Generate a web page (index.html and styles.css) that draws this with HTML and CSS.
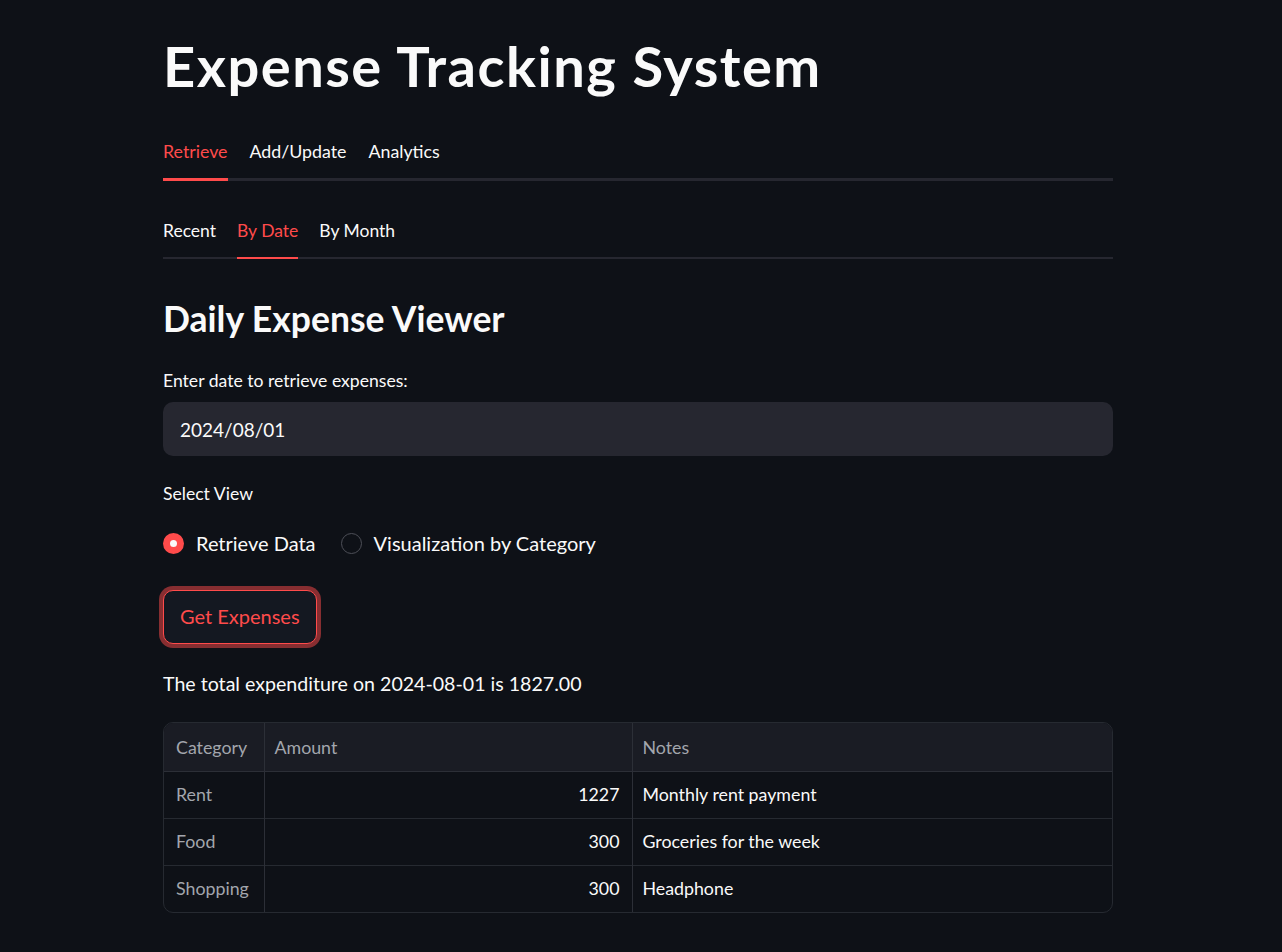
FILE: index.html
```html
<!DOCTYPE html>
<html lang="en">
<head>
<meta charset="utf-8">
<title>Expense Tracking System</title>
<link rel="stylesheet" href="styles.css">
</head>
<body>
<main class="page">
  <h1 class="title">Expense Tracking System</h1>

  <nav class="tabs tabs-main">
    <span class="tab active">Retrieve</span>
    <span class="tab">Add/Update</span>
    <span class="tab">Analytics</span>
  </nav>

  <nav class="tabs tabs-sub">
    <span class="tab">Recent</span>
    <span class="tab active">By Date</span>
    <span class="tab">By Month</span>
  </nav>

  <h2 class="subtitle">Daily Expense Viewer</h2>

  <label class="field-label">Enter date to retrieve expenses:</label>
  <div class="input">2024/08/01</div>

  <div class="field-label select-label">Select View</div>
  <div class="radios">
    <span class="radio checked"><span class="dot"></span>Retrieve Data</span>
    <span class="radio"><span class="dot"></span>Visualization by Category</span>
  </div>

  <div class="btn-row"><button class="btn">Get Expenses</button></div>

  <p class="total">The total expenditure on 2024-08-01 is 1827.00</p>

  <div class="table-wrap">
    <table class="grid">
      <thead>
        <tr><th class="c-cat">Category</th><th class="c-amt">Amount</th><th class="c-notes">Notes</th></tr>
      </thead>
      <tbody>
        <tr><td class="c-cat idx">Rent</td><td class="c-amt num">1227</td><td class="c-notes">Monthly rent payment</td></tr>
        <tr><td class="c-cat idx">Food</td><td class="c-amt num">300</td><td class="c-notes">Groceries for the week</td></tr>
        <tr><td class="c-cat idx">Shopping</td><td class="c-amt num">300</td><td class="c-notes">Headphone</td></tr>
      </tbody>
    </table>
  </div>
</main>
</body>
</html>
```
FILE: styles.css
```css
* { box-sizing: border-box; }
html, body {
  margin: 0;
  background: #0e1117;
  color: #fafafa;
  font-family: "Lato", "Source Sans Pro", "Liberation Sans", sans-serif;
}
.page {
  width: 950px;
  margin-left: 163px;
  padding-top: 32px;
  padding-bottom: 40px;
}
.title {
  margin: 0;
  font-size: 56px;
  line-height: 68px;
  font-weight: 700;
  letter-spacing: 1.5px;
  color: #fafafa;
}
.tabs {
  display: flex;
  gap: 22px;
  font-size: 17.8px;
  line-height: 24px;
}
.tab {
  color: #fafafa;
  padding-bottom: 14px;
}
.tab.active { color: #ff4b4b; }
.tabs-main {
  margin-top: 39px;
  border-bottom: 3px solid #262730;
}
.tabs-main .tab { margin-bottom: -3px; border-bottom: 3px solid transparent; padding-bottom: 15px; }
.tabs-main .tab.active { border-bottom-color: #ff4b4b; }
.tabs-sub {
  margin-top: 38px;
  gap: 21px;
  font-size: 17.5px;
  border-bottom: 2px solid #262730;
}
.tabs-sub .tab { margin-bottom: -2px; border-bottom: 2px solid transparent; }
.tabs-sub .tab.active { border-bottom-color: #ff4b4b; }

.subtitle {
  margin: 38px 0 0;
  font-size: 35.5px;
  line-height: 44px;
  font-weight: 700;
}
.field-label {
  display: block;
  margin-top: 28px;
  font-size: 17.6px;
  line-height: 24px;
}
.input {
  margin-top: 9px;
  height: 54px;
  border-radius: 10px;
  background: #262730;
  padding: 0 17px;
  display: flex;
  align-items: center;
  font-size: 19px;
}
.select-label { margin-top: 26px; }
.radios {
  margin-top: 25px;
  display: flex;
  gap: 25px;
  font-size: 20px;
  line-height: 24px;
}
.radio {
  display: flex;
  align-items: center;
  gap: 12px;
}
.dot {
  width: 21px;
  height: 21px;
  border-radius: 50%;
  border: 1px solid #4d4f57;
  background: transparent;
  display: inline-block;
}
.radio.checked .dot {
  border: 7px solid #ff4b4b;
  background: #fafafa;
}
.btn-row { margin-top: 35px; }
.btn {
  height: 54px;
  padding: 0 16px 2px;
  border: 1px solid #ff4b4b;
  border-radius: 10px;
  background: #141821;
  color: #ff4b4b;
  font-family: inherit;
  font-size: 20px;
  box-shadow: 0 0 0 4px rgba(255, 75, 75, 0.5);
}
.total {
  margin: 26px 0 0;
  font-size: 19.6px;
  line-height: 28px;
}
.table-wrap {
  margin-top: 24px;
  border: 1px solid #262a31;
  border-radius: 10px;
  overflow: hidden;
}
.grid {
  width: 100%;
  border-collapse: collapse;
  font-size: 17.8px;
  table-layout: fixed;
}
.grid th, .grid td {
  text-align: left;
  font-weight: 400;
  padding: 0 10px;
  white-space: nowrap;
}
.grid th {
  height: 48px;
  background: #1a1c24;
  color: #a3a6ad;
  border-bottom: 1px solid #2c2f37;
}
.grid td {
  height: 47px;
  color: #fafafa;
  border-top: 1px solid #262a31;
  padding-bottom: 1px;
}
.grid tbody tr:first-child td { border-top: none; }
.grid .c-cat { width: 100px; padding-left: 12px; }
.grid .c-amt { width: 368px; border-left: 1px solid #2c2f37; }
.grid .c-notes { border-left: 1px solid #2c2f37; }
.grid td.idx { color: #a3a6ad; }
.grid td.num { text-align: right; padding-right: 12px; }
```
